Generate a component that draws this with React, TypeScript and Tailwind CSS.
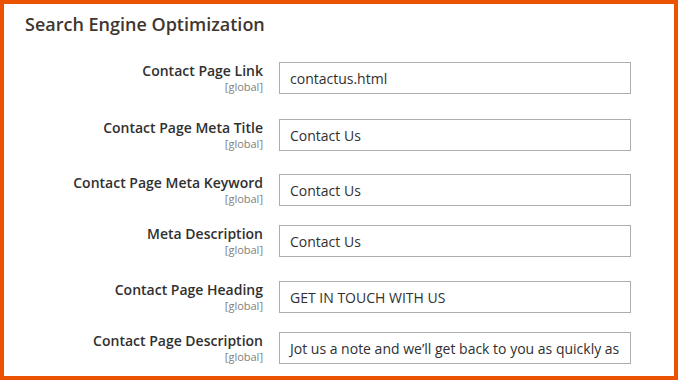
import React from "react";

const rows = [
  { label: "Contact Page Link", value: "contactus.html", mt: "mt-[26px]" },
  { label: "Contact Page Meta Title", value: "Contact Us", mt: "mt-[25px]" },
  { label: "Contact Page Meta Keyword", value: "Contact Us", mt: "mt-[23px]" },
  { label: "Meta Description", value: "Contact Us", mt: "mt-[19px]" },
  { label: "Contact Page Heading", value: "GET IN TOUCH WITH US", mt: "mt-[24px]" },
  {
    label: "Contact Page Description",
    value: "Jot us a note and we\u2019ll get back to you as quickly as",
    mt: "mt-[19px]",
  },
];

export default function App() {
  return (
    <div
      className="w-[678px] h-[380px] border-4 border-[#eb5202] bg-white overflow-hidden"
      style={{ fontFamily: '"Open Sans", "Noto Sans", sans-serif' }}
    >
      <div className="pt-2 pl-[21px] text-[18px] leading-[24px] font-semibold text-[#41362f]">
        Search Engine Optimization
      </div>
      {rows.map((r) => (
        <div key={r.label} className={`flex items-start ${r.mt}`}>
          <div className="w-[259px] flex flex-col items-end">
            <div className="text-[14px] leading-[18px] font-semibold text-[#303030]">{r.label}</div>
            <div className="text-[11px] leading-[13px] text-[#808080]">[global]</div>
          </div>
          <div className="ml-4 w-[352px] h-8 border border-[#adadad] bg-white flex items-center px-[10px] overflow-hidden">
            <span className="text-[14px] text-[#303030] whitespace-nowrap">{r.value}</span>
          </div>
        </div>
      ))}
    </div>
  );
}
